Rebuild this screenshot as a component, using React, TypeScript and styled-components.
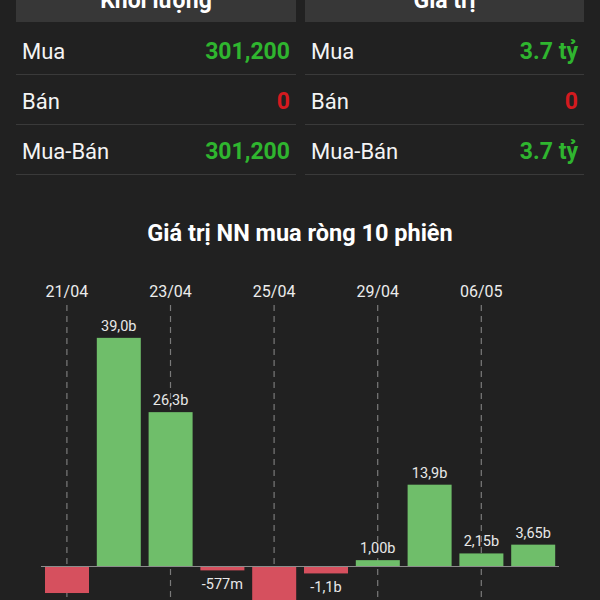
import React from "react";
import styled, { createGlobalStyle } from "styled-components";

const GlobalStyle = createGlobalStyle`
  html, body {
    margin: 0;
    padding: 0;
    background: #212121;
    overflow: hidden;
  }
  body {
    font-family: Roboto, "Noto Sans", "Liberation Sans", sans-serif;
    color: #f2f2f2;
  }
`;

type Row = { label: string; value: string; tone: "up" | "down" };

const volumeRows: Row[] = [
  { label: "Mua", value: "301,200", tone: "up" },
  { label: "Bán", value: "0", tone: "down" },
  { label: "Mua-Bán", value: "301,200", tone: "up" },
];

const valueRows: Row[] = [
  { label: "Mua", value: "3.7 tỷ", tone: "up" },
  { label: "Bán", value: "0", tone: "down" },
  { label: "Mua-Bán", value: "3.7 tỷ", tone: "up" },
];

type Bar = { date: string; value: number; label: string };

const bars: Bar[] = [
  { date: "21/04", value: -4.45, label: "-4,45b" },
  { date: "22/04", value: 39.0, label: "39,0b" },
  { date: "23/04", value: 26.3, label: "26,3b" },
  { date: "24/04", value: -0.577, label: "-577m" },
  { date: "25/04", value: -7.2, label: "-7,2b" },
  { date: "28/04", value: -1.1, label: "-1,1b" },
  { date: "29/04", value: 1.0, label: "1,00b" },
  { date: "05/05", value: 13.9, label: "13,9b" },
  { date: "06/05", value: 2.15, label: "2,15b" },
  { date: "07/05", value: 3.65, label: "3,65b" },
];

const Page = styled.div`
  width: 600px;
  margin-top: -24px;
`;

const Panels = styled.div`
  display: grid;
  grid-template-columns: 280px 279px;
  column-gap: 9px;
  padding: 0 16px;
`;

const Panel = styled.div`
  display: flex;
  flex-direction: column;
`;

const PanelHead = styled.div`
  box-sizing: border-box;
  height: 46px;
  margin-bottom: 3px;
  padding-top: 2px;
  background: #373737;
  display: flex;
  align-items: center;
  justify-content: center;
  font-size: 23px;
  font-weight: 700;
  color: #ffffff;
`;

const StatRow = styled.div`
  box-sizing: border-box;
  height: 50px;
  border-bottom: 1px solid #3a3a3a;
  display: flex;
  align-items: center;
  justify-content: space-between;
  padding: 4px 6px 0 6px;
  font-size: 22px;
`;

const StatLabel = styled.span`
  color: #f4f4f4;
`;

const StatValue = styled.span<{ $tone: "up" | "down" }>`
  font-weight: 700;
  font-size: 23px;
  color: ${(p) => (p.$tone === "up" ? "#2fb52f" : "#d41a1f")};
`;

const ChartTitle = styled.h2`
  margin: 45px 0 0;
  height: 26px;
  line-height: 26px;
  text-align: center;
  font-size: 23.5px;
  font-weight: 700;
  color: #ffffff;
`;

const ChartBox = styled.svg`
  display: block;
  margin-top: 14px;
`;

const SLOT = 51.8;
const LEFT = 41;
const BAR_W = 44;
const ZERO = 306;
const SCALE = 5.85;

function StatPanel({ title, rows }: { title: string; rows: Row[] }) {
  return (
    <Panel>
      <PanelHead>{title}</PanelHead>
      {rows.map((r) => (
        <StatRow key={r.label}>
          <StatLabel>{r.label}</StatLabel>
          <StatValue $tone={r.tone}>{r.value}</StatValue>
        </StatRow>
      ))}
    </Panel>
  );
}

function NetChart() {
  return (
    <ChartBox width={600} height={340} viewBox="0 0 600 340">
      {bars.map((b, i) => {
        if (i % 2 !== 0) return null;
        const cx = LEFT + i * SLOT + SLOT / 2;
        return (
          <g key={b.date}>
            <text
              x={cx}
              y={37}
              textAnchor="middle"
              fontSize={16}
              fill="#ececec"
              fontFamily="Roboto, sans-serif"
            >
              {b.date}
            </text>
            <line
              x1={cx}
              x2={cx}
              y1={45}
              y2={340}
              stroke="#7a7a7a"
              strokeWidth={1.2}
              strokeDasharray="6 5"
            />
          </g>
        );
      })}
      {bars.map((b, i) => {
        const x = LEFT + i * SLOT + 4;
        const cx = x + BAR_W / 2;
        const h = Math.abs(b.value) * SCALE;
        const up = b.value >= 0;
        const y = up ? ZERO - h : ZERO + 1;
        return (
          <g key={b.date + "bar"}>
            <rect x={x} y={y} width={BAR_W} height={h} fill={up ? "#6fbe6a" : "#d6505e"} />
            <text
              x={cx}
              y={up ? y - 7 : y + h + 19}
              textAnchor="middle"
              fontSize={14.5}
              fill="#e8e8e8"
              fontFamily="Roboto, sans-serif"
            >
              {b.label}
            </text>
          </g>
        );
      })}
      <line x1={LEFT} x2={LEFT + 10 * SLOT} y1={ZERO + 0.5} y2={ZERO + 0.5} stroke="#8c8c8c" strokeWidth={1} />
    </ChartBox>
  );
}

export default function App() {
  return (
    <Page>
      <GlobalStyle />
      <Panels>
        <StatPanel title="Khối lượng" rows={volumeRows} />
        <StatPanel title="Giá trị" rows={valueRows} />
      </Panels>
      <ChartTitle>Giá trị NN mua ròng 10 phiên</ChartTitle>
      <NetChart />
    </Page>
  );
}
